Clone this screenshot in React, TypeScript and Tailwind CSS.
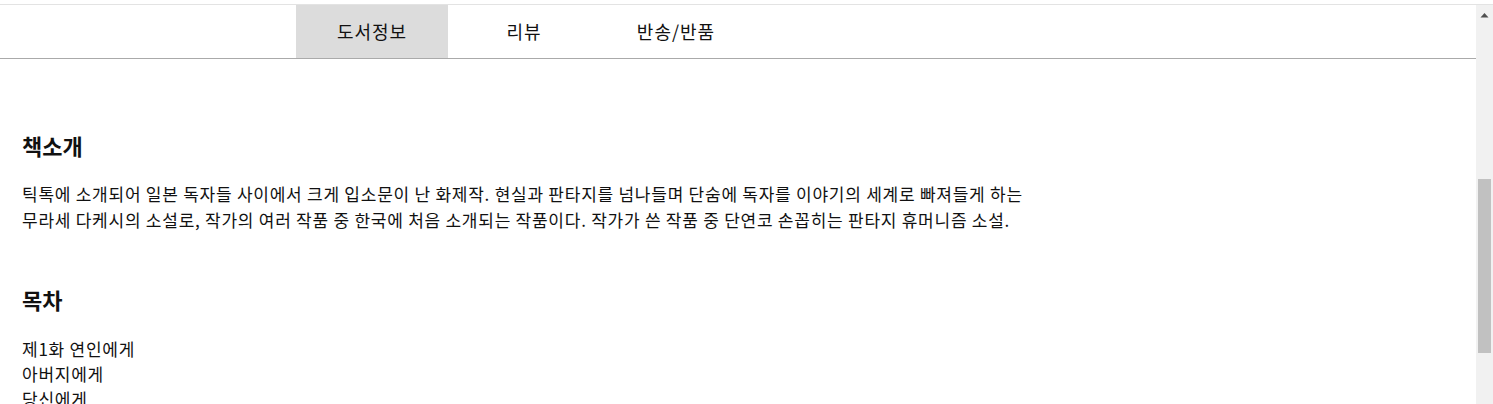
import React from 'react';

const tabs = ['도서정보', '리뷰', '반송/반품'];
const toc = ['제1화 연인에게', '아버지에게', '당신에게'];

export default function App() {
  return (
    <div
      className="h-[404px] w-[1493px] overflow-hidden bg-white text-[#111]"
      style={{ fontFamily: '"Noto Sans CJK KR", "Noto Sans", sans-serif' }}
    >
      <div className="h-[4px]" />
      <div className="flex h-[400px] border-t border-[#e3e3e3]">
        <div className="flex-1 overflow-hidden">
          <nav className="flex h-[54px] border-b border-[#aaa] pl-[296px]">
            {tabs.map((t, i) => (
              <div
                key={t}
                className={`flex w-[152px] items-center justify-center text-[18px] tracking-[1px] ${i === 0 ? 'bg-[#dcdcdc]' : ''}`}
              >
                {t}
              </div>
            ))}
          </nav>
          <section className="px-[22px] pt-[71px]">
            <h2 className="text-[22px] font-bold leading-[30px]">책소개</h2>
            <p className="mt-[21px] whitespace-nowrap text-[17px] leading-[26px] tracking-[0.75px]">
              틱톡에 소개되어 일본 독자들 사이에서 크게 입소문이 난 화제작. 현실과 판타지를 넘나들며 단숨에 독자를 이야기의 세계로 빠져들게 하는
              <br />
              무라세 다케시의 소설로, 작가의 여러 작품 중 한국에 처음 소개되는 작품이다. 작가가 쓴 작품 중 단연코 손꼽히는 판타지 휴머니즘 소설.
            </p>
            <h2 className="mt-[51px] text-[22px] font-bold leading-[30px]">목차</h2>
            <ul className="mt-[22px] text-[17px] leading-[25px] tracking-[0.75px]">
              {toc.map((t) => (
                <li key={t}>{t}</li>
              ))}
            </ul>
          </section>
        </div>
        <div className="flex w-[17px] flex-col items-center bg-[#f1f1f1]">
          <svg width="9" height="6" viewBox="0 0 9 6" className="mt-[7px]">
            <path d="M0.5 5.5 L4.5 1 L8.5 5.5 Z" fill="#505050" />
          </svg>
          <div className="mt-[161px] h-[174px] w-[13px] bg-[#c1c1c1]" />
        </div>
      </div>
    </div>
  );
}
